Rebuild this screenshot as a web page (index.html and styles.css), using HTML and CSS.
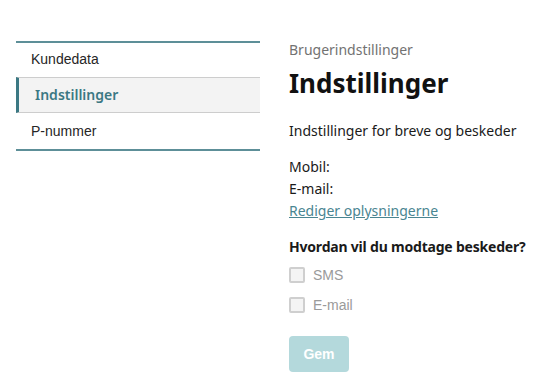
FILE: index.html
```html
<!DOCTYPE html>
<html lang="da">
<head>
    <meta charset="UTF-8">
    <meta name="viewport" content="width=device-width, initial-scale=1.0">
    <title>Brugerindstillinger</title>
    <link rel="stylesheet" href="styles.css">
</head>
<body>
    <div class="page">
        <nav class="side-nav">
            <a class="nav-item" href="#">Kundedata</a>
            <a class="nav-item active" href="#">Indstillinger</a>
            <a class="nav-item" href="#">P-nummer</a>
        </nav>

        <main class="content">
            <div class="crumb">Brugerindstillinger</div>
            <h1 class="title">Indstillinger</h1>

            <p class="lead">Indstillinger for breve og beskeder</p>

            <div class="contact">
                <div>Mobil:</div>
                <div>E-mail:</div>
                <a class="edit-link" href="#">Rediger oplysningerne</a>
            </div>

            <h2 class="question">Hvordan vil du modtage beskeder?</h2>

            <label class="check">
                <span class="box"></span>
                <span class="check-label">SMS</span>
            </label>
            <label class="check">
                <span class="box"></span>
                <span class="check-label">E-mail</span>
            </label>

            <button class="save" disabled>Gem</button>
        </main>
    </div>
</body>
</html>
```

FILE: styles.css
```css
* {
    margin: 0;
    padding: 0;
    box-sizing: border-box;
}

body {
    font-family: 'Noto Sans', 'Open Sans', sans-serif;
    background: #ffffff;
    color: #1a1a1a;
    font-size: 14px;
}

.page {
    display: flex;
    align-items: flex-start;
    padding: 41px 0 0 16px;
}

.side-nav {
    width: 244px;
    flex-shrink: 0;
    display: flex;
    flex-direction: column;
    border-top: 2px solid #5d8f98;
    border-bottom: 2px solid #5d8f98;
}

.nav-item {
    display: block;
    height: 36px;
    line-height: 36px;
    padding-left: 15px;
    font-family: 'Liberation Sans', Arial, sans-serif;
    font-size: 14px;
    color: #262626;
    text-decoration: none;
}

.nav-item:first-child {
    height: 34px;
    line-height: 33px;
}

.nav-item.active {
    background: #f3f3f3;
    border-top: 1px solid #cdcdcd;
    border-bottom: 1px solid #cdcdcd;
    border-left: 3px solid #3b7883;
    padding-left: 16px;
    line-height: 34px;
    font-family: 'Noto Sans', sans-serif;
    font-weight: 600;
    color: #3b7883;
}

.content {
    padding-left: 29px;
    flex: 1;
}

.crumb {
    font-size: 14px;
    color: #727272;
    line-height: 18px;
}

.title {
    font-size: 26px;
    font-weight: 700;
    color: #111;
    line-height: 32px;
    margin-top: 8px;
}

.lead {
    margin-top: 22px;
    line-height: 20px;
}

.contact {
    margin-top: 15px;
    line-height: 22px;
}

.edit-link {
    color: #4a8591;
    text-decoration: underline;
}

.question {
    font-size: 14px;
    font-weight: 700;
    letter-spacing: -0.2px;
    margin-top: 15px;
    line-height: 20px;
}

.check {
    display: flex;
    align-items: center;
    gap: 8px;
    margin-top: 8px;
    height: 20px;
}

.check + .check {
    margin-top: 10px;
}

.box {
    width: 16px;
    height: 16px;
    border: 2px solid #cfcfcf;
    border-radius: 2px;
    background: #f4f4f4;
}

.check-label {
    font-family: 'Liberation Sans', Arial, sans-serif;
    font-size: 14px;
    color: #9a9a9a;
}

.save {
    display: block;
    margin-top: 21px;
    width: 60px;
    height: 36px;
    border: none;
    border-radius: 4px;
    background: #b4d9dc;
    color: #ffffff;
    font-family: 'Liberation Sans', Arial, sans-serif;
    font-size: 14px;
    font-weight: 700;
}
```
